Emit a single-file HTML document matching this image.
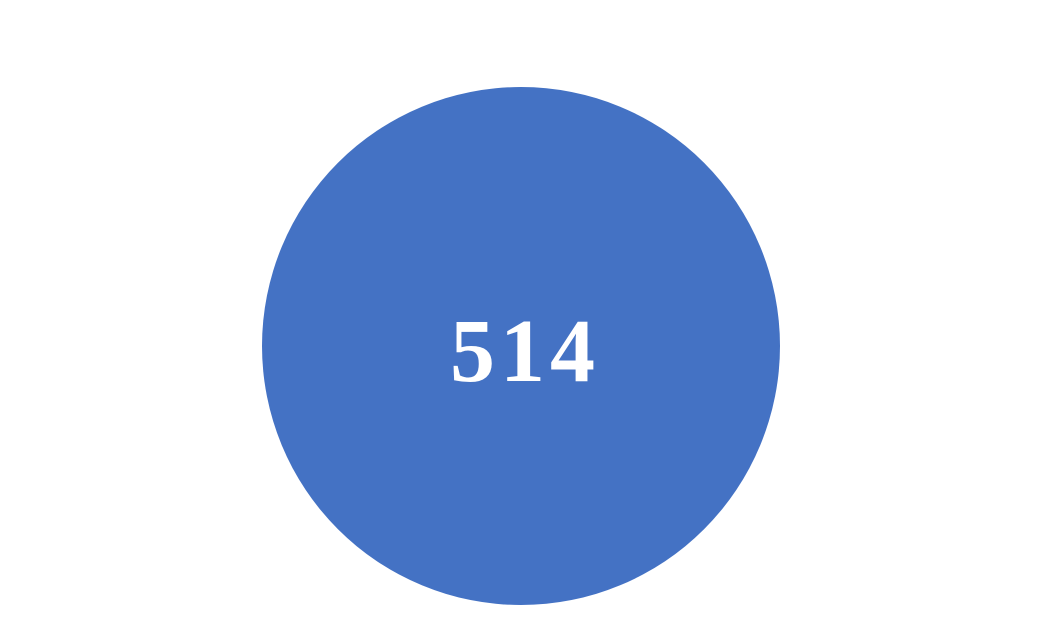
<!DOCTYPE html>
<html>
<head>
<style>
html,body{margin:0;padding:0;background:#fff;}
body{width:1042px;height:628px;position:relative;overflow:hidden;}
.c{position:absolute;left:262px;top:87px;width:518px;height:518px;border-radius:50%;background:#4472C4;}
.t{position:absolute;left:4px;width:1042px;top:302px;text-align:center;font-family:"Liberation Serif",serif;font-weight:bold;font-size:90px;line-height:100px;color:#fff;letter-spacing:5px;}
</style>
</head>
<body>
<div class="c"></div>
<div class="t">514</div>
</body>
</html>
